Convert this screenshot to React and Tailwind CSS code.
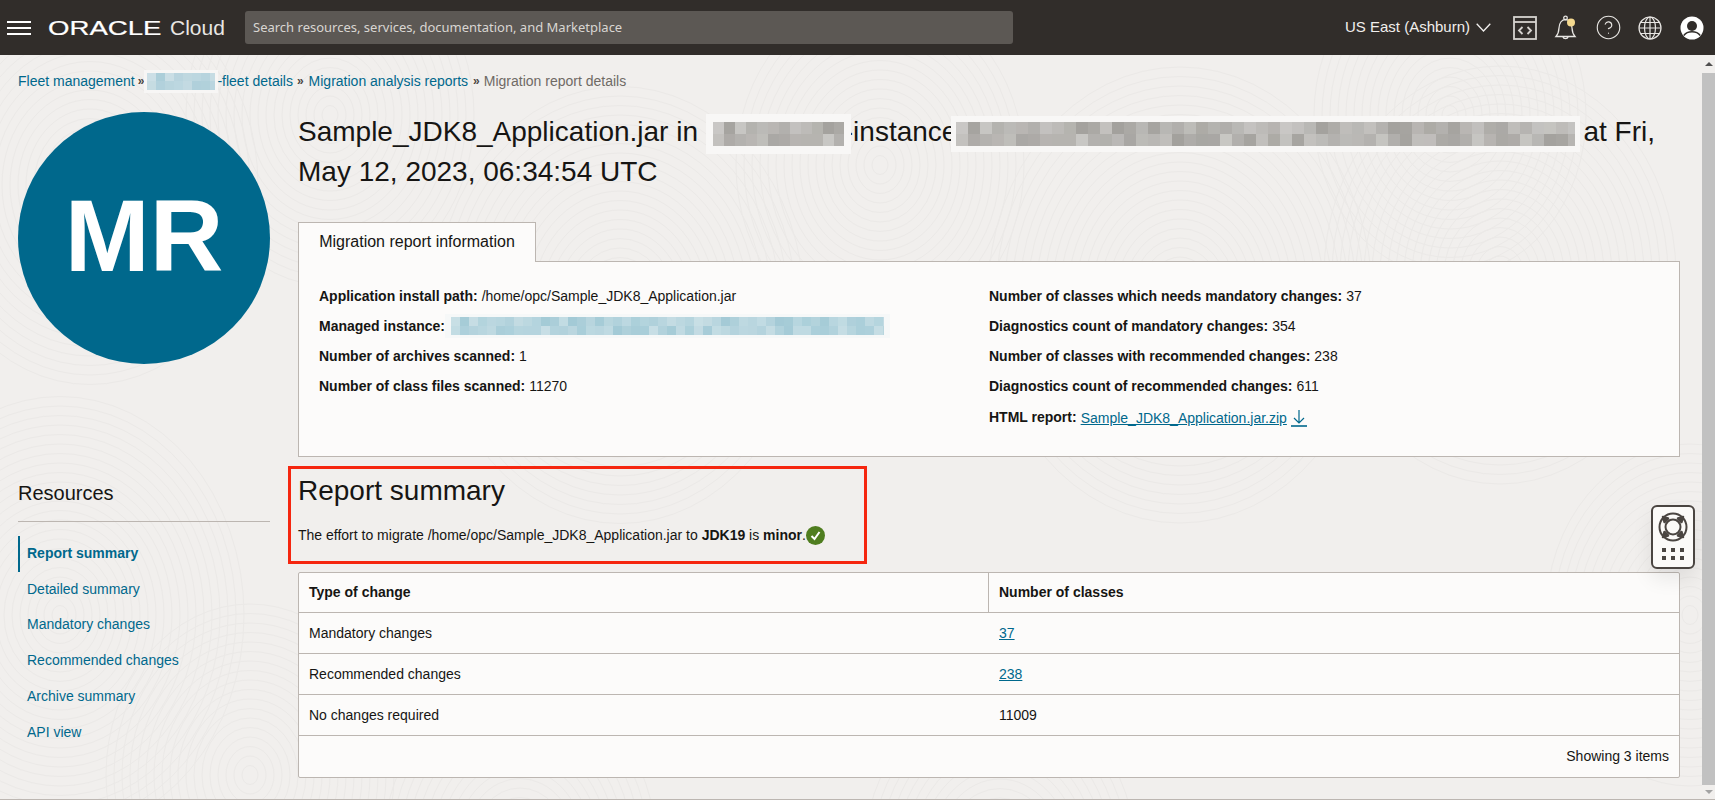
import { CircleHelp } from "lucide-react";

const navItems = [
  "Report summary",
  "Detailed summary",
  "Mandatory changes",
  "Recommended changes",
  "Archive summary",
  "API view",
];

const leftInfo = [
  ["Application install path:", "/home/opc/Sample_JDK8_Application.jar"],
  ["Managed instance:", null],
  ["Number of archives scanned:", "1"],
  ["Number of class files scanned:", "11270"],
];

const rightInfo = [
  ["Number of classes which needs mandatory changes:", "37"],
  ["Diagnostics count of mandatory changes:", "354"],
  ["Number of classes with recommended changes:", "238"],
  ["Diagnostics count of recommended changes:", "611"],
];

// fingerprint swirls of the page background
const swirls = [
  [90, 130, 190], [330, 60, 170], [620, 250, 210], [880, 110, 170], [1180, 240, 220], [1500, 220, 200],
  [60, 560, 210], [250, 720, 170], [520, 790, 160], [1000, 800, 160], [1690, 560, 170], [1450, 60, 160],
];

// pseudo random mosaic used for the blurred out names
const shade = (i, j) => {
  const n = Math.sin(i * 12.9898 + j * 78.233) * 43758.5453;
  return n - Math.floor(n);
};

const Mosaic = ({ width, height, cell, pad, padY, color, halo, className = "" }) => {
  const cols = Math.ceil(width / cell);
  const rows = Math.round(height / (cell + 1)) || 1;
  return (
    <span
      className={`inline-flex items-center justify-center align-middle ${className}`}
      style={{ width: width + pad * 2, height: height + padY * 2, background: halo }}
    >
      <span className="flex flex-col overflow-hidden" style={{ width, height }}>
        {Array.from({ length: rows }).map((_, r) => (
          <span key={r} className="flex flex-1">
            {Array.from({ length: cols }).map((_, c) => (
              <span
                key={c}
                className="shrink-0 h-full"
                style={{ width: cell, background: color, opacity: 0.55 + shade(c, r) * 0.45 }}
              />
            ))}
          </span>
        ))}
      </span>
    </span>
  );
};

const CodeIcon = () => (
  <svg width="24" height="24" viewBox="0 0 24 24" fill="none" stroke="#d6d3cf" strokeWidth="1.8">
    <rect x="1" y="1" width="22" height="22" />
    <path d="M1 6h22" />
    <path d="M9.500 11l-3.500 3.500 3.500 3.500M14.500 11l3.500 3.500-3.500 3.500" />
  </svg>
);

const BellIcon = () => (
  <svg width="24" height="26" viewBox="0 0 24 26" fill="none" stroke="#e8e6e3" strokeWidth="1.3">
    <path d="M2 21.500h19c-2.400-2.600-2.800-5-3-8.500-.3-5-2.800-8.500-6.500-8.500S5.300 8 5 13c-.2 3.500-.6 5.900-3 8.500z" />
    <circle cx="11.500" cy="3" r="1.800" />
    <path d="M8.800 21.500a2.800 2.800 0 0 0 5.400 0" />
    <circle cx="17" cy="7.500" r="4" fill="#f5d98f" stroke="none" />
  </svg>
);

const GlobeIcon = () => (
  <svg width="24" height="24" viewBox="0 0 24 24" fill="none" stroke="#e8e6e3" strokeWidth="1.2">
    <circle cx="12" cy="12" r="11" />
    <ellipse cx="12" cy="12" rx="5.500" ry="11" />
    <path d="M12 1v22M1 12h22M2.800 6.500h18.400M2.800 17.500h18.400" />
  </svg>
);

const UserIcon = () => (
  <svg width="24" height="24" viewBox="0 0 24 24">
    <circle cx="12" cy="12" r="11.500" fill="#fff" />
    <circle cx="12" cy="10" r="5" fill="#312d2a" />
    <path d="M3.800 19.500c2-2.800 4.800-3.700 8.200-3.700s6.200.9 8.200 3.700" fill="none" stroke="#312d2a" strokeWidth="1.400" />
  </svg>
);

const LifeBuoyIcon = () => (
  <svg width="30" height="30" viewBox="0 0 30 30" fill="none" stroke="#4a4541">
    <circle cx="15" cy="15" r="13.500" strokeWidth="2" />
    <circle cx="15" cy="15" r="7.500" strokeWidth="2" />
    <path
      d="M5 5l5 1.500-3.500 3.500zM25 5l-5 1.500 3.500 3.500zM5 25l5-1.500-3.500-3.500zM25 25l-5-1.500 3.500-3.500z"
      fill="#4a4541"
      strokeWidth="2.500"
      strokeLinejoin="round"
    />
  </svg>
);

const Sep = ({ className = "mx-[3px]" }) => (
  <span className={`${className} text-[#4a4541] text-[12px] font-bold`}>»</span>
);

const App = () => {
  return (
    <div className="h-screen flex flex-col overflow-hidden bg-[#f1efed] text-[14px] text-[#161513] font-['Liberation_Sans',Arial,sans-serif]">
      {/* Top bar */}
      <header className="h-[55px] shrink-0 bg-[#312d2a] flex items-center text-[#f1efed]">
        <div className="ml-[7px] w-[24px] flex flex-col gap-[4px]">
          <span className="h-[2px] bg-white" />
          <span className="h-[2px] bg-white" />
          <span className="h-[2px] bg-white" />
        </div>
        <div className="ml-[17px] w-[122px] h-[28px] flex items-center">
          <span className="text-[20px] leading-none origin-left scale-x-[1.38] text-white [-webkit-text-stroke:0.2px_white]">ORACLE</span>
        </div>
        <span className="text-[21px] font-light text-[#e8e6e3] w-[55px]">Cloud</span>
        <div className="ml-[20px] w-[768px] h-[33px] rounded-[3px] bg-[#5c5854] flex items-center pl-[8px] text-[13px] text-[#d9d6d2] font-['Noto_Sans',sans-serif]">
          Search resources, services, documentation, and Marketplace
        </div>
        <span className="ml-[332px] text-[15px] text-[#f1efed]">US East (Ashburn)</span>
        <svg className="ml-[6px]" width="15" height="9" viewBox="0 0 15 9" fill="none" stroke="#f1efed" strokeWidth="1.300">
          <path d="M.7.700L7.500 8l6.800-7.300" />
        </svg>
        <div className="ml-[22px]"><CodeIcon /></div>
        <div className="ml-[17px] mt-[1px]"><BellIcon /></div>
        <div className="ml-[17px] text-[#e8e6e3]"><CircleHelp size={27} strokeWidth={1} /></div>
        <div className="ml-[16px]"><GlobeIcon /></div>
        <div className="ml-[18px]"><UserIcon /></div>
      </header>

      <div className="flex-1 flex min-h-0 border-b border-[#bcb6b1]">
        <main className="relative flex-1 overflow-hidden">
          <svg className="absolute inset-0 pointer-events-none" width="1702" height="745" fill="none" stroke="#ebe9e7" strokeWidth="1">
            {swirls.map(([x, y, r]) =>
              Array.from({ length: Math.floor(r / 9) }).map((_, i) => (
                <ellipse key={`${x}-${i}`} cx={x} cy={y} rx={(i + 1) * 8} ry={(i + 1) * 9.500} />
              ))
            )}
          </svg>

          <div className="relative">
            {/* Breadcrumb */}
            <nav className="h-[52px] pl-[18px] flex items-center text-[14px] text-[#00688c]">
              <span>Fleet management</span>
              <Sep className="ml-[3px] mr-0" />
              <Mosaic width={68} height={17} cell={9} pad={3} padY={3} color="#a9ccd8" halo="#f7f6f5" />
              <span className="-ml-[1px]">-fleet details</span>
              <Sep className="ml-[4px] mr-[5px]" />
              <span>Migration analysis reports</span>
              <Sep className="ml-[5px] mr-[4px]" />
              <span className="text-[#6f6a65]">Migration report details</span>
            </nav>

            <div className="flex">
              {/* Left column */}
              <aside className="ml-[18px] w-[252px] shrink-0">
                <div className="mt-[5px] w-[252px] h-[252px] rounded-full bg-[#00688c] flex items-center justify-center text-white text-[102px] leading-none font-bold pb-[4px]">
                  MR
                </div>
                <h2 className="mt-[115px] text-[20px] leading-[28px]">Resources</h2>
                <div className="mt-[14px] h-px bg-[#bcb6b1]" />
                <ul className="mt-[14px] text-[#00688c]">
                  {navItems.map((item, i) => (
                    <li
                      key={item}
                      className={`h-[35.8px] pb-[1px] flex items-center ${i === 0 ? "font-bold border-l-2 border-[#00688c] pl-[7px]" : "pl-[9px]"}`}
                    >
                      {item}
                    </li>
                  ))}
                </ul>
              </aside>

              {/* Right column */}
              <section className="ml-[28px] w-[1382px] shrink-0">
                <h1 className="mt-[5px] text-[28px] leading-[40px] whitespace-nowrap">
                  <span>Sample_JDK8_Application.jar in </span>
                  <Mosaic width={131} height={24} cell={11} pad={7} padY={8} color="#a3a19d" halo="#f8f7f6" className="-my-[8px] relative z-10" />
                  <span className="-ml-[7px]">-instance</span>
                  <Mosaic width={619} height={24} cell={12} pad={5} padY={6} color="#a3a19d" halo="#f8f7f6" className="-my-[6px] -ml-[6px]" />
                  <span className="ml-[3px]">at Fri,</span>
                  <br />
                  May 12, 2023, 06:34:54 UTC
                </h1>

                <div className="mt-[30px] relative z-10 -mb-px w-[238px] h-[40px] pb-[2px] bg-[#fcfbfa] border border-b-0 border-[#bcb6b1] flex items-center justify-center text-[16px]">
                  Migration report information
                </div>
                <div className="h-[196px] bg-[#fcfbfa] border border-[#bcb6b1] pl-[20px] pt-[19px] flex">
                  <div className="w-[670px]">
                    {leftInfo.map(([label, value]) => (
                      <div key={label} className="h-[30px] flex items-center">
                        <b className="mr-[4px]">{label}</b>
                        {value ?? (
                          <Mosaic width={433} height={18} cell={9} pad={6} padY={3} color="#a3cad6" halo="#f6f8f8" className="-ml-[4px]" />
                        )}
                      </div>
                    ))}
                  </div>
                  <div>
                    {rightInfo.map(([label, value]) => (
                      <div key={label} className="h-[30px] flex items-center">
                        <b className="mr-[4px]">{label}</b>
                        {value}
                      </div>
                    ))}
                    <div className="h-[32px] flex items-center">
                      <b className="mr-[4px]">HTML report:</b>
                      <span className="text-[#00688c] underline mt-[2px]">Sample_JDK8_Application.jar.zip</span>
                      <svg className="ml-[4px] mt-[2px]" width="16" height="18" viewBox="0 0 16 18" fill="none" stroke="#00688c" strokeWidth="1.200">
                        <path d="M8 1v13M3 9l5 5 5-5" />
                        <path d="M0 17h16" strokeWidth="1.600" />
                      </svg>
                    </div>
                  </div>
                </div>

                {/* Report summary */}
                <div className="relative">
                  <div className="absolute -left-[10px] top-[9px] w-[579px] h-[98px] border-[3px] border-[#f5260f] pointer-events-none" />
                  <h2 className="pt-[16px] text-[28px] leading-[36px]">Report summary</h2>
                  <p className="mt-[16px] h-[20px] flex items-center">
                    The effort to migrate /home/opc/Sample_JDK8_Application.jar to&nbsp;<b>JDK19</b>&nbsp;is&nbsp;<b>minor</b>.
                    <svg width="19" height="19" viewBox="0 0 19 19">
                      <circle cx="9.500" cy="9.500" r="9.500" fill="#4f7d1f" />
                      <path d="M5.500 10l3 3 5-7" fill="none" stroke="#fff" strokeWidth="2" />
                    </svg>
                  </p>
                </div>

                <div className="mt-[27px] bg-[#fcfbfa] border border-[#bcb6b1] rounded-[2px] divide-y divide-[#bcb6b1]">
                  <div className="h-[40px] flex font-bold">
                    <div className="w-[690px] pl-[10px] flex items-center border-r border-[#bcb6b1]">Type of change</div>
                    <div className="pl-[10px] flex items-center">Number of classes</div>
                  </div>
                  <div className="h-[41px] flex items-center">
                    <div className="w-[690px] pl-[10px]">Mandatory changes</div>
                    <a className="pl-[10px] text-[#00688c] underline">37</a>
                  </div>
                  <div className="h-[41px] flex items-center">
                    <div className="w-[690px] pl-[10px]">Recommended changes</div>
                    <a className="pl-[10px] text-[#00688c] underline">238</a>
                  </div>
                  <div className="h-[41px] flex items-center">
                    <div className="w-[690px] pl-[10px]">No changes required</div>
                    <div className="pl-[10px]">11009</div>
                  </div>
                  <div className="h-[41px] flex items-center justify-end pr-[10px]">Showing 3 items</div>
                </div>
              </section>
            </div>
          </div>

          {/* Help widget */}
          <div className="absolute left-[1651px] top-[450px] w-[44px] h-[64px] rounded-[6px] border-2 border-[#4a4541] bg-[#fbfaf8] shadow-[0_10px_20px_rgba(0,0,0,0.08)] flex flex-col items-center pt-[5px]">
            <LifeBuoyIcon />
            <div className="mt-[6px] grid grid-cols-3 gap-x-[5px] gap-y-[4px]">
              {[0, 1, 2, 3, 4, 5].map((d) => (
                <span key={d} className="w-[4px] h-[4px] bg-[#4a4541]" />
              ))}
            </div>
          </div>
        </main>

        {/* Scrollbar */}
        <div className="w-[13px] shrink-0 flex flex-col items-center bg-[#f1efed]">
          <div className="h-[18px] w-full flex items-center justify-center">
            <span className="w-0 h-0 border-x-[4px] border-x-transparent border-b-[4px] border-b-[#505050]" />
          </div>
          <div className="flex-1 w-full bg-[#c1c1c1]" />
          <div className="h-[14px] w-full flex items-center justify-center">
            <span className="w-0 h-0 border-x-[4px] border-x-transparent border-t-[4px] border-t-[#a3a3a3]" />
          </div>
        </div>
      </div>
    </div>
  );
};

export default App;
